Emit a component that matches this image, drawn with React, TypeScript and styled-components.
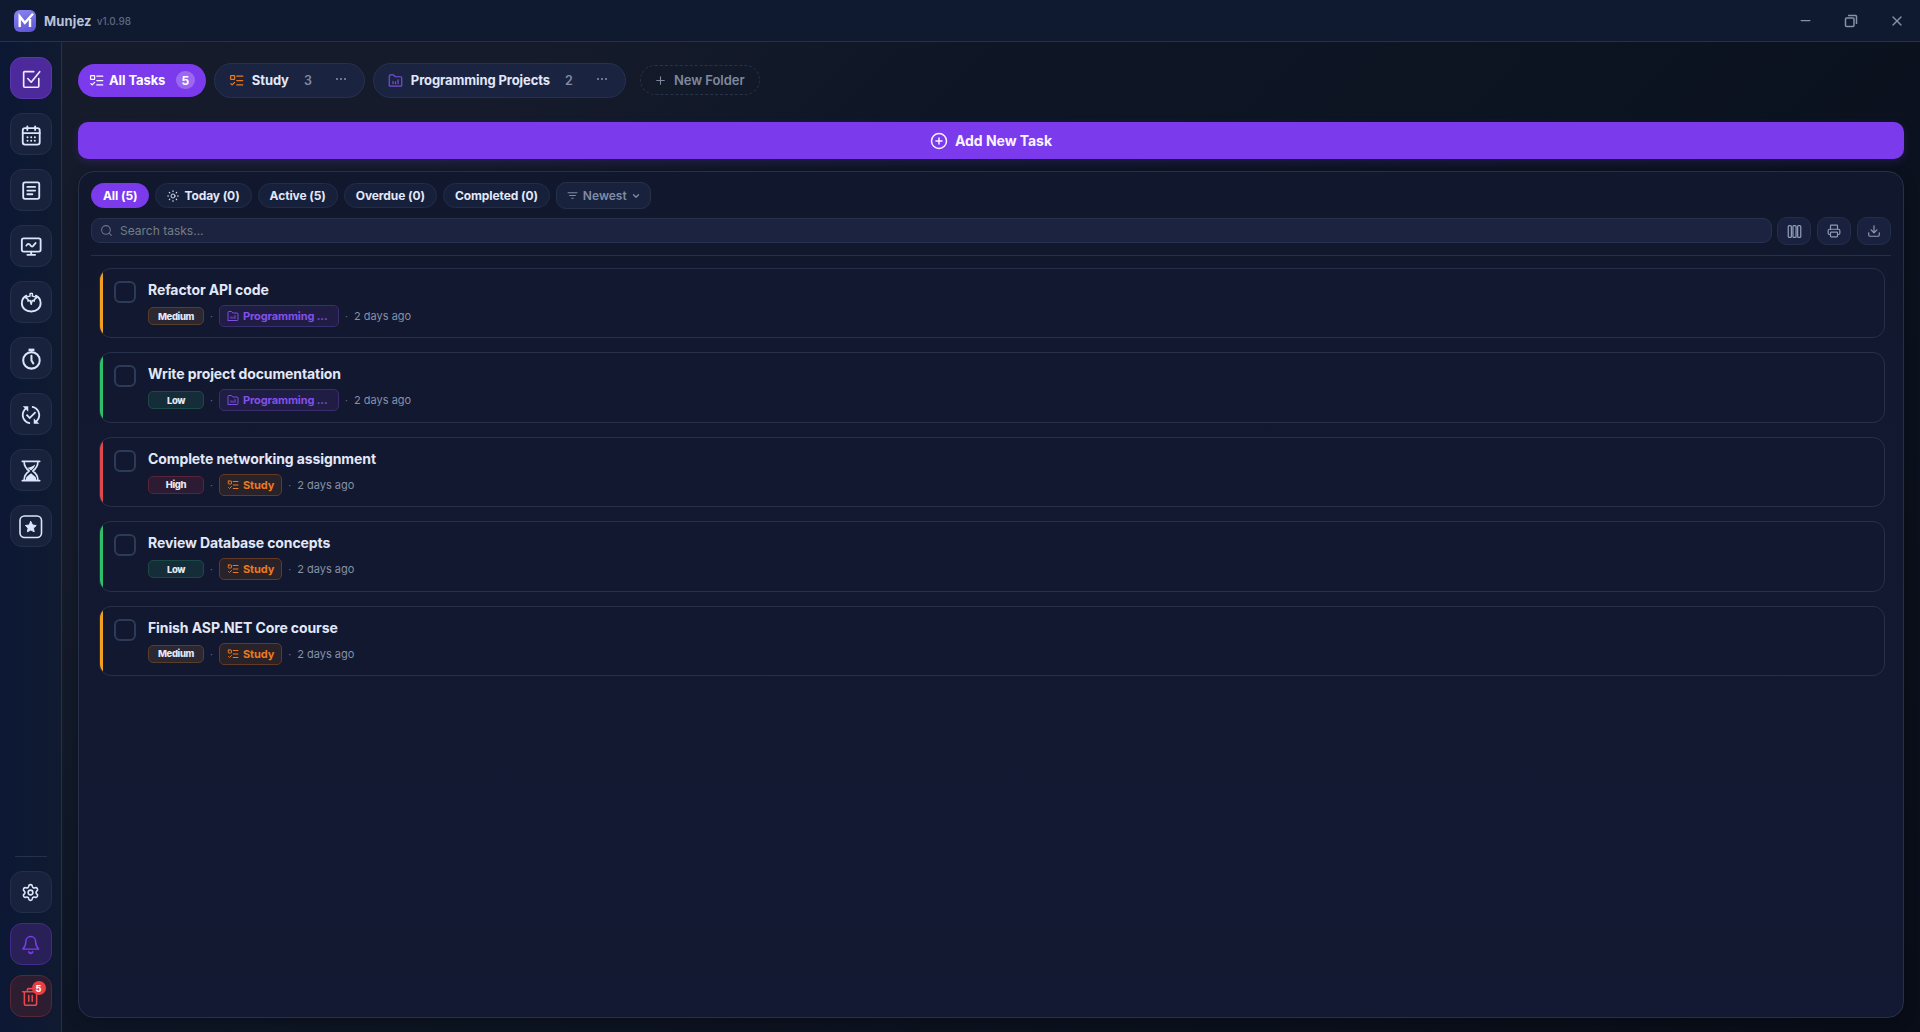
import React from "react";
import styled, { createGlobalStyle, css } from "styled-components";
import { ChevronDown, Download, Minus, Plus, CirclePlus, Printer, Search, Settings, X } from "lucide-react";
import { MdPublishedWithChanges, MdFilterList } from "react-icons/md";

const GlobalStyle = createGlobalStyle`
  *, *::before, *::after { box-sizing: border-box; }
  html, body, #root { height: 100%; margin: 0; }
  body {
    background: #0d1520;
    color: #e2e8f8;
    font-family: Inter, "Liberation Sans", sans-serif;
    overflow: hidden;
  }
  button { font: inherit; color: inherit; margin: 0; padding: 0; border: 0; background: none; }
  svg { display: block; flex: none; }
`;

const Window = styled.div`
  display: flex;
  flex-direction: column;
  height: 100vh;
  background: linear-gradient(135deg, #171b2b 0%, #151b2b 20%, #0e1626 36%, #0c1320 60%, #090d18 100%);
`;

const TitleBar = styled.header`
  display: flex;
  align-items: center;
  flex: none;
  height: 42px;
  padding: 0 15px 0 14px;
  background: #0f1930;
  border-bottom: 1px solid #24314b;
`;

const Logo = styled.div`
  width: 22px;
  height: 22px;
  border-radius: 6px;
  background: linear-gradient(160deg, #8b86ee, #5b51d6);
`;

const AppName = styled.span`
  margin-left: 8px;
  font-size: 13px;
  font-weight: 700;
  letter-spacing: 0.15px;
  line-height: 20px;
  color: #b9c3da;
`;

const Version = styled.span`
  margin-left: 5px;
  font-size: 10px;
  font-weight: 500;
  line-height: 20px;
  padding-top: 1px;
  color: #5d6880;
`;

const WindowControls = styled.div`
  display: flex;
  align-items: center;
  gap: 31px;
  margin-left: auto;
  color: #8590a9;
`;

const Body = styled.div`
  display: flex;
  flex: 1;
  min-height: 0;
`;

const Sidebar = styled.nav`
  display: flex;
  flex-direction: column;
  align-items: center;
  justify-content: space-between;
  flex: none;
  width: 62px;
  padding: 15px 0 15px;
  background: linear-gradient(90deg, #0c1834, #101a30);
  border-right: 1px solid #24314b;
`;

const NavGroup = styled.div<{ $gap: number }>`
  display: flex;
  flex-direction: column;
  align-items: center;
  gap: ${(p) => p.$gap}px;
`;

type Tone = "plain" | "active" | "alert" | "danger";
const tones = {
  plain: css`background: #19223c; border-color: #232e48; color: #dce5fa;`,
  active: css`background: #4c2a9b; border-color: #5a37ae; color: #f1eaff;`,
  alert: css`background: #2a2058; border-color: #43298a; color: #7c3aed;`,
  danger: css`background: #2d1d31; border-color: #592736; color: #e5484a;`,
};

const NavButton = styled.button<{ $tone?: Tone }>`
  position: relative;
  display: flex;
  align-items: center;
  justify-content: center;
  width: 42px;
  height: 42px;
  padding-top: 1px;
  border: 1px solid;
  border-radius: 12px;
  ${(p) => tones[p.$tone ?? "plain"]}
`;

const NavDivider = styled.div`
  width: 32px;
  height: 1px;
  margin-bottom: 4px;
  background: #24314b;
`;

const CountDot = styled.span`
  position: absolute;
  top: 5px;
  right: 5px;
  display: flex;
  align-items: center;
  justify-content: center;
  width: 14px;
  height: 14px;
  border-radius: 50%;
  background: #e83f43;
  color: #fff;
  font-size: 9px;
  font-weight: 800;
`;

const Main = styled.main`
  display: flex;
  flex-direction: column;
  flex: 1;
  min-width: 0;
  padding: 21px 16px 14px;
`;

const Folders = styled.div`
  display: flex;
  align-items: center;
  height: 35px;
  gap: 8px;
`;

const FolderTab = styled.button<{ $active?: boolean }>`
  display: flex;
  align-items: center;
  height: ${(p) => (p.$active ? 33 : 35)}px;
  padding: ${(p) => (p.$active ? "0 11px 1px" : "0 18px 1px 14px")};
  border: ${(p) => (p.$active ? "0" : "1px solid #26324d")};
  border-radius: 18px;
  background: ${(p) => (p.$active ? "#7c3aed" : "#1a2340")};
  color: ${(p) => (p.$active ? "#ffffff" : "#e2e8f8")};
  font-size: 13px;
  font-weight: 700;
  letter-spacing: -0.1px;
  white-space: nowrap;
`;

const FolderIcon = styled.span<{ $color: string; $gap: number }>`
  margin-right: ${(p) => p.$gap}px;
  color: ${(p) => p.$color};
`;

const FolderCount = styled.span<{ $active?: boolean }>`
  display: flex;
  align-items: center;
  justify-content: center;
  width: 19px;
  height: 18px;
  margin-left: ${(p) => (p.$active ? 10.5 : 9.5)}px;
  border-radius: 9px;
  background: ${(p) => (p.$active ? "rgba(255,255,255,.24)" : "transparent")};
  color: ${(p) => (p.$active ? "#fff" : "#818ca5")};
  font-size: ${(p) => (p.$active ? 12 : 12.5)}px;
  font-weight: ${(p) => (p.$active ? 700 : 600)};
`;

const Dots = styled.span`
  display: flex;
  gap: 2px;
  margin-left: 18.5px;
  margin-bottom: 2px;
  i { width: 2px; height: 2px; border-radius: 1px; background: #8793ad; }
`;

const NewFolder = styled.button`
  display: flex;
  align-items: center;
  gap: 7px;
  height: 30px;
  margin-left: 6px;
  margin-top: -1px;
  padding: 0 14px 0 13px;
  border: 1px dashed #283349;
  border-radius: 15px;
  color: #7e899e;
  font-size: 13px;
  font-weight: 600;
  letter-spacing: -0.05px;
`;

const AddTask = styled.button`
  display: flex;
  align-items: center;
  justify-content: center;
  gap: 7px;
  flex: none;
  height: 37px;
  margin-top: 24px;
  border-radius: 10px;
  background: #7c3aed;
  box-shadow: 0 3px 10px rgba(124, 58, 237, 0.18);
  color: #f8f4ff;
  font-size: 14px;
  font-weight: 700;
  letter-spacing: -0.05px;
`;

const Panel = styled.section`
  display: flex;
  flex-direction: column;
  flex: 1;
  min-height: 0;
  margin-top: 12px;
  padding: 10px 12px;
  border: 1px solid #263149;
  border-radius: 16px;
  background: linear-gradient(180deg, #11182e, #131932);
  box-shadow: 0 4px 14px rgba(0, 0, 0, 0.25);
`;

const Filters = styled.div`
  display: flex;
  align-items: center;
  gap: 6px;
  height: 27px;
`;

const FilterPill = styled.button<{ $active?: boolean }>`
  display: flex;
  align-items: center;
  gap: 5px;
  height: 25px;
  padding: 0 11px;
  border: 1px solid ${(p) => (p.$active ? "#7c3aed" : "#222d46")};
  border-radius: 13px;
  background: ${(p) => (p.$active ? "#7c3aed" : "#17203b")};
  color: ${(p) => (p.$active ? "#fff" : "#e2e8f8")};
  font-size: 12px;
  font-weight: 700;
  letter-spacing: -0.09px;
  white-space: nowrap;
`;

const SortButton = styled.button`
  display: flex;
  align-items: center;
  height: 27px;
  padding: 0 9px;
  gap: 4px;
  border: 1px solid #263149;
  border-radius: 10px;
  background: #19223c;
  color: #7f8ba5;
  font-size: 12px;
  font-weight: 600;
`;

const SearchRow = styled.div`
  display: flex;
  align-items: center;
  gap: 6px;
  height: 28px;
  margin-top: 8px;
`;

const SearchBox = styled.div`
  display: flex;
  align-items: center;
  gap: 7px;
  flex: 1;
  height: 25px;
  margin: -1px -1px 0 0;
  padding: 0 8px;
  border: 1px solid #27324c;
  border-radius: 9px;
  background: #1b2340;
  color: #66748e;
  font-size: 12px;
`;

const Placeholder = styled.span`
  color: #737d84;
`;

const ToolButton = styled.button`
  display: flex;
  align-items: center;
  justify-content: center;
  width: 34px;
  height: 28px;
  border: 1px solid #232e49;
  border-radius: 10px;
  background: #19213f;
  color: #8f9bb7;
`;

const Rule = styled.div`
  height: 1px;
  margin-top: 10px;
  background: #263149;
`;

const TaskList = styled.div`
  display: flex;
  flex-direction: column;
  gap: 14px;
  padding: 12px 6px 0 8px;
`;

const Card = styled.article<{ $accent: string }>`
  position: relative;
  display: flex;
  height: 70.4px;
  padding: 12px 13px 0 14px;
  border: 1px solid #263149;
  border-radius: 12px;
  overflow: hidden;
  background: #12182f;

  &::before {
    content: "";
    position: absolute;
    inset: -1px auto -1px -1px;
    width: 4px;
    background: ${(p) => p.$accent};
  }
`;

const CheckBox = styled.span`
  flex: none;
  width: 22px;
  height: 22px;
  border: 2px solid #2c3b58;
  border-radius: 6px;
`;

const TaskBody = styled.div`
  display: flex;
  flex-direction: column;
  margin-left: 12px;
`;

const TaskTitle = styled.h3`
  margin: -2px 0 5px;
  font-size: 14px;
  font-weight: 700;
  line-height: 21px;
  letter-spacing: -0.1px;
`;

const Meta = styled.div`
  display: flex;
  align-items: center;
`;

const priorities = {
  Low: { color: "#2fbf6a", back: "#142d38", line: "#1b4a46" },
  Medium: { color: "#f29f1f", back: "#2c2730", line: "#563f2b" },
  High: { color: "#e04850", back: "#2c1b32", line: "#592539" },
};
type Priority = keyof typeof priorities;

const PriorityTag = styled.span<{ $level: Priority }>`
  display: flex;
  align-items: center;
  justify-content: center;
  width: 56px;
  height: 18px;
  border: 1px solid ${(p) => priorities[p.$level].line};
  border-radius: 5px;
  background: ${(p) => priorities[p.$level].back};
  font-size: 9.5px;
  font-weight: 800;
  letter-spacing: -0.4px;
`;

const Separator = styled.span`
  width: 15px;
  text-align: center;
  font-size: 10px;
  color: #64708a;
`;

const folderTones = {
  study: css`color: #ea7a1f; background: #292229; border-color: #623a25;`,
  programming: css`color: #8250ea; background: #201d44; border-color: #3a2e6e; min-width: 120px;`,
};

const FolderTag = styled.span<{ $tone: keyof typeof folderTones }>`
  display: flex;
  align-items: center;
  gap: 4px;
  height: 22px;
  padding: 0 7px;
  border: 1px solid;
  border-radius: 5px;
  font-size: 11px;
  font-weight: 700;
  letter-spacing: -0.12px;
  white-space: nowrap;
  ${(p) => folderTones[p.$tone]}
`;

const Age = styled.span`
  color: #8591a8;
  font-size: 11px;
`;

type IconProps = { size: number; stroke?: number; children: React.ReactNode };
const Icon = ({ size, stroke = 2, children }: IconProps) => (
  <svg width={size} height={size} viewBox="0 0 24 24" fill="none" stroke="currentColor" strokeWidth={stroke} strokeLinecap="round" strokeLinejoin="round">
    {children}
  </svg>
);

const LogoMark = () => (
  <svg width="22" height="22" viewBox="0 0 22 22" fill="none" stroke="#fff" strokeWidth="2.4">
    <path d="M5.7 17V6.500l5.100 6.300L19 3.800" strokeLinejoin="miter" />
    <path d="M16 17V9" />
  </svg>
);

const CheckedBox = () => (
  <Icon size={22} stroke={1.8}>
    <path d="M15 4H5a1 1 0 0 0-1 1v15a1 1 0 0 0 1 1h14.500a1 1 0 0 0 1-1v-8.500" />
    <path d="m8.500 11.500 3.700 4L21.500 4" />
  </Icon>
);
const Calendar = () => (
  <Icon size={22} stroke={2}>
    <rect x="3" y="4.500" width="18.500" height="18" rx="2.500" />
    <path d="M8 2.500v4M16.500 2.500v4M3 10h18.500" />
    <path d="M8.200 14.500h.01M12.200 14.500h.01M16.200 14.500h.01M8.200 18.300h.01M12.200 18.300h.01M16.200 18.300h.01" strokeWidth="2.200" />
  </Icon>
);
const Note = () => (
  <Icon size={22}>
    <rect x="3.500" y="2.500" width="17.500" height="18" rx="2" />
    <path d="M8 7.500h8.500M8 11.500h8.500M8 15.500h5.500" />
  </Icon>
);
const Monitor = () => (
  <Icon size={22}>
    <rect x="2" y="2.500" width="20.500" height="14.500" rx="2" />
    <path d="M12.200 17v3.500M8 20.500h8.500" />
    <path d="M7 10.500c1.500-2.500 3-2.500 4.300-.5s2.500 2 3.700 0l2-2.300" />
  </Icon>
);
const Tomato = () => (
  <Icon size={22} stroke={2}>
    <path d="M7 4C3.800 5.500 2 8.500 2 12.300c0 5.500 4.500 9 10.200 9s10.300-3.500 10.300-9c0-3.800-2-6.800-5.200-8.300" />
    <path d="M11 1.500h2.500v3l5 1.300-3 2.500.2 1.700-2.400-.7-1.100 4.200-1.100-4.200-2.400.7.200-1.700-3-2.500 5-1.300Z" strokeWidth="1.600" />
  </Icon>
);
const Stopwatch = () => (
  <Icon size={22} stroke={2.2}>
    <circle cx="12.500" cy="13.500" r="9" />
    <path d="M9.300 2h6.400" strokeWidth="2.600" strokeLinecap="butt" />
    <path d="M12.500 8.500v5l2 3.300" />
  </Icon>
);
const Hourglass = () => (
  <Icon size={22} stroke={1.8}>
    <path d="M2.500 1.500h19M2.500 22.500h19M4.500 2c0 5 2 7.500 5.500 10-3.500 2.500-5.500 5-5.500 10M19.500 2c0 5-2 7.500-5.500 10 3.500 2.500 5.500 5 5.500 10" />
    <path d="M8 8.500c2 0 5-1 8.500-3.500-.5 3-2.500 5-4.500 6.500Zm4 6 5 4 1 3.500H6l1-3.500Z" fill="currentColor" stroke="none" />
  </Icon>
);
const StarBox = () => (
  <Icon size={24} stroke={1.6}>
    <rect x="1" y="1" width="21.500" height="21.500" rx="4.500" />
    <path d="m11.800 6.500 1.700 3.500 3.700.5-2.700 2.600.7 3.700-3.400-1.800-3.400 1.800.7-3.700-2.700-2.600 3.700-.5Z" fill="currentColor" strokeWidth="1" />
  </Icon>
);
const BellIcon = () => (
  <Icon size={22} stroke={1.6}>
    <path d="M3.200 16.500c2-2 3.200-4 3.200-8.500a5.300 5.300 0 0 1 10.600 0c0 4.500 1.200 6.500 3.200 8.500Z" />
    <path d="M9.700 19.700a2.200 2.200 0 0 0 4 0" strokeWidth="2" />
  </Icon>
);
const TrashIcon = () => (
  <Icon size={21} stroke={1.8}>
    <path d="M3 6.500h17M8.500 6V4a1 1 0 0 1 1-1H15M5 6.500V20a2 2 0 0 0 2 2h10a2 2 0 0 0 2-2V8M10 11v6.500M14 11v6.500" />
  </Icon>
);
const SunIcon = () => (
  <Icon size={12} stroke={1.8}>
    <circle cx="12" cy="12" r="4" />
    <path d="M12 1.500v1.500M12 21v1.500M1.500 12H3M21 12h1.500M4.600 4.600l1 1M18.400 18.400l1 1M4.600 19.400l1-1M18.400 5.600l1-1" strokeWidth="2.200" />
  </Icon>
);
const Checklist = ({ size }: { size: number }) => (
  <Icon size={size} stroke={2}>
    <rect x="2.500" y="4" width="6.500" height="6" rx="1" />
    <path d="m3 17 2 2 4-4M12.500 5H22M12.500 12H22M12.500 19H22" />
  </Icon>
);
const FolderChart = ({ size }: { size: number }) => (
  <Icon size={size} stroke={1.9}>
    <path d="M2 20.500V5a2 2 0 0 1 2-2h5l2.500 3H20a2 2 0 0 1 2 2v11.500a1.500 1.500 0 0 1-1.500 1.500H2.500Z" />
    <path d="M8 17v-3.500M12 17v-3M16 17v-6" />
  </Icon>
);
const Columns = () => (
  <Icon size={15} stroke={2}>
    <rect x="2" y="2.500" width="5" height="19" rx="1.500" />
    <rect x="9.500" y="2.500" width="5" height="19" rx="1.500" />
    <rect x="17" y="2.500" width="5" height="19" rx="1.500" />
  </Icon>
);
const Restore = () => (
  <svg width="14" height="14" viewBox="0 0 14 14" fill="none" stroke="currentColor" strokeWidth="1.5">
    <rect x="1.500" y="4" width="8.500" height="8.500" rx="1" />
    <path d="M4 1.500h7.500a1 1 0 0 1 1 1V10" />
  </svg>
);

const tasks: { title: string; priority: Priority; folder: keyof typeof folderTones }[] = [
  { title: "Refactor API code", priority: "Medium", folder: "programming" },
  { title: "Write project documentation", priority: "Low", folder: "programming" },
  { title: "Complete networking assignment", priority: "High", folder: "study" },
  { title: "Review Database concepts", priority: "Low", folder: "study" },
  { title: "Finish ASP.NET Core course", priority: "Medium", folder: "study" },
];

const navIcons = [
  <CheckedBox />,
  <Calendar />,
  <Note />,
  <Monitor />,
  <Tomato />,
  <Stopwatch />,
  <MdPublishedWithChanges size={22} />,
  <Hourglass />,
  <StarBox />,
];

const MoreDots = () => <Dots><i /><i /><i /></Dots>;

export default function App() {
  return (
    <Window>
      <GlobalStyle />
      <TitleBar>
        <Logo><LogoMark /></Logo>
        <AppName>Munjez</AppName>
        <Version>v1.0.98</Version>
        <WindowControls>
          <Minus size={15} />
          <Restore />
          <X size={16} />
        </WindowControls>
      </TitleBar>
      <Body>
        <Sidebar>
          <NavGroup $gap={14}>
            {navIcons.map((icon, i) => (
              <NavButton key={i} $tone={i === 0 ? "active" : "plain"}>{icon}</NavButton>
            ))}
          </NavGroup>
          <NavGroup $gap={10}>
            <NavDivider />
            <NavButton><Settings size={19} /></NavButton>
            <NavButton $tone="alert"><BellIcon /></NavButton>
            <NavButton $tone="danger"><TrashIcon /><CountDot>5</CountDot></NavButton>
          </NavGroup>
        </Sidebar>
        <Main>
          <Folders>
            <FolderTab $active>
              <FolderIcon $color="#fff" $gap={5}><Checklist size={15} /></FolderIcon>
              All Tasks
              <FolderCount $active>5</FolderCount>
            </FolderTab>
            <FolderTab>
              <FolderIcon $color="#ea7a1f" $gap={8}><Checklist size={15} /></FolderIcon>
              Study
              <FolderCount>3</FolderCount>
              <MoreDots />
            </FolderTab>
            <FolderTab>
              <FolderIcon $color="#7c4ae0" $gap={8}><FolderChart size={15} /></FolderIcon>
              Programming Projects
              <FolderCount>2</FolderCount>
              <MoreDots />
            </FolderTab>
            <NewFolder><Plus size={13} />New Folder</NewFolder>
          </Folders>
          <AddTask><CirclePlus size={18} />Add New Task</AddTask>
          <Panel>
            <Filters>
              <FilterPill $active>All (5)</FilterPill>
              <FilterPill><SunIcon />Today (0)</FilterPill>
              <FilterPill>Active (5)</FilterPill>
              <FilterPill>Overdue (0)</FilterPill>
              <FilterPill>Completed (0)</FilterPill>
              <SortButton><MdFilterList size={13} />Newest<ChevronDown size={10} strokeWidth={3} /></SortButton>
            </Filters>
            <SearchRow>
              <SearchBox><Search size={13} /><Placeholder>Search tasks...</Placeholder></SearchBox>
              <ToolButton><Columns /></ToolButton>
              <ToolButton><Printer size={14} /></ToolButton>
              <ToolButton><Download size={14} /></ToolButton>
            </SearchRow>
            <Rule />
            <TaskList>
              {tasks.map((t) => (
                <Card key={t.title} $accent={priorities[t.priority].color}>
                  <CheckBox />
                  <TaskBody>
                    <TaskTitle>{t.title}</TaskTitle>
                    <Meta>
                      <PriorityTag $level={t.priority}>{t.priority}</PriorityTag>
                      <Separator>·</Separator>
                      <FolderTag $tone={t.folder}>
                        {t.folder === "study" ? <Checklist size={12} /> : <FolderChart size={12} />}
                        {t.folder === "study" ? "Study" : "Programming ..."}
                      </FolderTag>
                      <Separator>·</Separator>
                      <Age>2 days ago</Age>
                    </Meta>
                  </TaskBody>
                </Card>
              ))}
            </TaskList>
          </Panel>
        </Main>
      </Body>
    </Window>
  );
}
